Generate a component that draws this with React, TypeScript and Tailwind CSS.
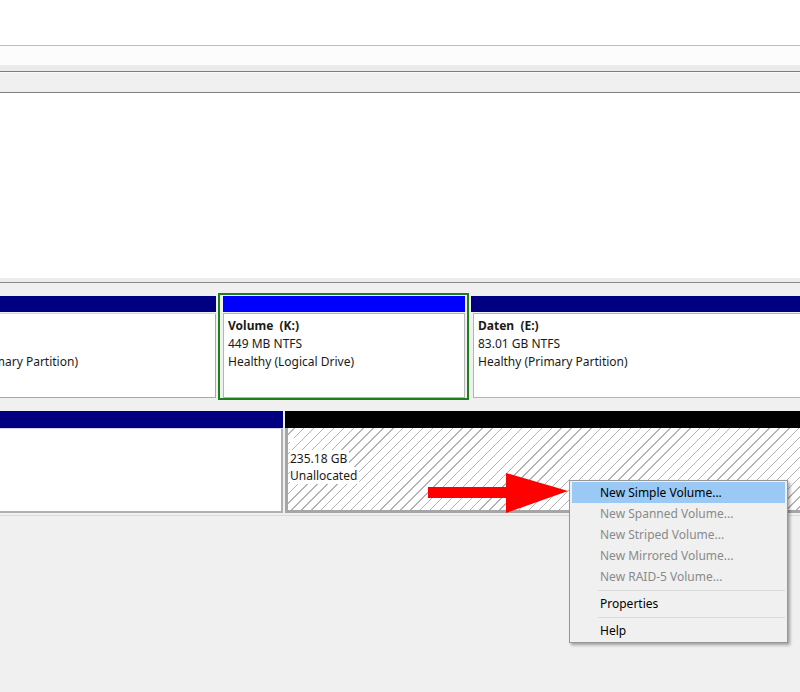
const MENU = [
  { label: "New Simple Volume...", active: true },
  { label: "New Spanned Volume...", disabled: true },
  { label: "New Striped Volume...", disabled: true },
  { label: "New Mirrored Volume...", disabled: true },
  { label: "New RAID-5 Volume...", disabled: true },
  { sep: true },
  { label: "Properties" },
  { sep: true },
  { label: "Help" },
];

function VolumeText({ lines }: { lines: { text: string; bold?: boolean }[] }) {
  return (
    <div className="pl-[4px] pt-[3px] leading-[18px]">
      {lines.map((l, i) => (
        <div key={i} className={l.bold ? "font-bold whitespace-pre" : "whitespace-pre"}>
          {l.text}
        </div>
      ))}
    </div>
  );
}

function ContextMenu() {
  return (
    <div className="absolute left-[569px] top-[480px] w-[219px] border border-[#979797] bg-[#f0f0f0] p-[1px] shadow-[2px_2px_3px_rgba(0,0,0,0.35)]">
      {MENU.map((item, i) =>
        item.sep ? (
          <div key={i} className="flex h-[6px] items-center pl-[27px] pr-[1px]">
            <div className="h-[1px] w-full bg-[#d9d9d9]" />
          </div>
        ) : (
          <div
            key={i}
            className={
              "mx-[1px] flex h-[21px] items-center pl-[28px] " +
              (item.active ? "bg-[#99c9f4] text-black" : item.disabled ? "text-[#8a8a8a]" : "text-black")
            }
          >
            {item.label}
          </div>
        )
      )}
    </div>
  );
}

function RedArrow() {
  return (
    <svg className="absolute left-[428px] top-[472px]" width="142" height="42" viewBox="0 0 142 42">
      <rect x="0" y="15" width="82" height="11" fill="#ff0000" />
      <polygon points="78,1 140,19 78,41" fill="#ff0000" />
    </svg>
  );
}

export default function App() {
  return (
    <div className="relative flex h-[692px] w-[800px] flex-col overflow-hidden bg-[#f0f0f0] font-['Segoe_UI','Noto_Sans',sans-serif] text-[12px] text-[#1a1a1a]">
      {/* upper list pane */}
      <div className="h-[46px] border-b border-[#bdbdbd] bg-white" />
      <div className="h-[19px] bg-[#fcfcfc]" />
      <div className="h-[6px] bg-[#ebebeb]" />
      <div className="h-[1px] bg-[#7c7c7c]" />
      <div className="h-[21px] border-b border-t border-b-[#808080] border-t-[#fafafa] bg-[#f0f0f0]" />
      <div className="h-[185px] bg-white" />
      <div className="h-[4px] bg-[#ececec]" />
      <div className="h-[1px] bg-[#8a8a8a]" />

      {/* disk row 1 */}
      <div className="mt-[10px] flex items-start">
        <div className="mt-[3px] w-[216px]">
          <div className="h-[16px] bg-[#000080]" />
          <div className="mt-[1px] h-[1px] bg-[#d4d4f0]" />
          <div className="h-[84px] border-b border-r border-[#a8a8a8] bg-white">
            <div className="pt-[3px] leading-[18px]">
              <div>&nbsp;</div>
              <div>&nbsp;</div>
              <div className="flex w-[78px] justify-end whitespace-nowrap">Healthy (Primary Partition)</div>
            </div>
          </div>
        </div>
        <div className="ml-[2px] h-[107px] w-[251px] border-2 border-[#1f7f1f] py-[1px] pl-[3px] pr-[2px]">
          <div className="h-[16px] bg-[#0000ff]" />
          <div className="mt-[1px] h-[85px] border border-[#b4b4b4] bg-white">
            <VolumeText
              lines={[
                { text: "Volume  (K:)", bold: true },
                { text: "449 MB NTFS" },
                { text: "Healthy (Logical Drive)" },
              ]}
            />
          </div>
        </div>
        <div className="ml-[2px] mt-[3px] flex-1">
          <div className="h-[16px] bg-[#000080]" />
          <div className="mt-[1px] ml-[2px] h-[85px] border border-r-0 border-[#b4b4b4] bg-white">
            <VolumeText
              lines={[
                { text: "Daten  (E:)", bold: true },
                { text: "83.01 GB NTFS" },
                { text: "Healthy (Primary Partition)" },
              ]}
            />
          </div>
        </div>
      </div>

      {/* disk row 2 */}
      <div className="mt-[11px] flex items-start">
        <div className="w-[283px]">
          <div className="h-[17px] bg-[#000080]" />
          <div className="h-[1px] bg-[#d4d4f0]" />
          <div className="h-[84px] border-b-2 border-r-2 border-[#b0b0b0] bg-white" />
        </div>
        <div className="ml-[2px] flex-1">
          <div className="h-[17px] bg-black" />
          <div className="h-[85px] border-b-[3px] border-l-[3px] border-[#a6a6a6] bg-[repeating-linear-gradient(135deg,#ffffff_0px,#ffffff_4px,#b3b3b3_4px,#b3b3b3_5px,#ffffff_5px,#ffffff_7px)] pl-[2px] pt-[4px] leading-[17.5px]">
            <div>
              <span className="inline-block h-[7px] w-[4px] bg-white" />
            </div>
            <div>
              <span className="bg-white pr-[2px]">235.18 GB</span>
            </div>
            <div>
              <span className="bg-white pr-[2px]">Unallocated</span>
            </div>
          </div>
        </div>
      </div>
      <div className="mt-[2px] h-[1px] bg-[#dadada]" />

      <RedArrow />
      <ContextMenu />
    </div>
  );
}
